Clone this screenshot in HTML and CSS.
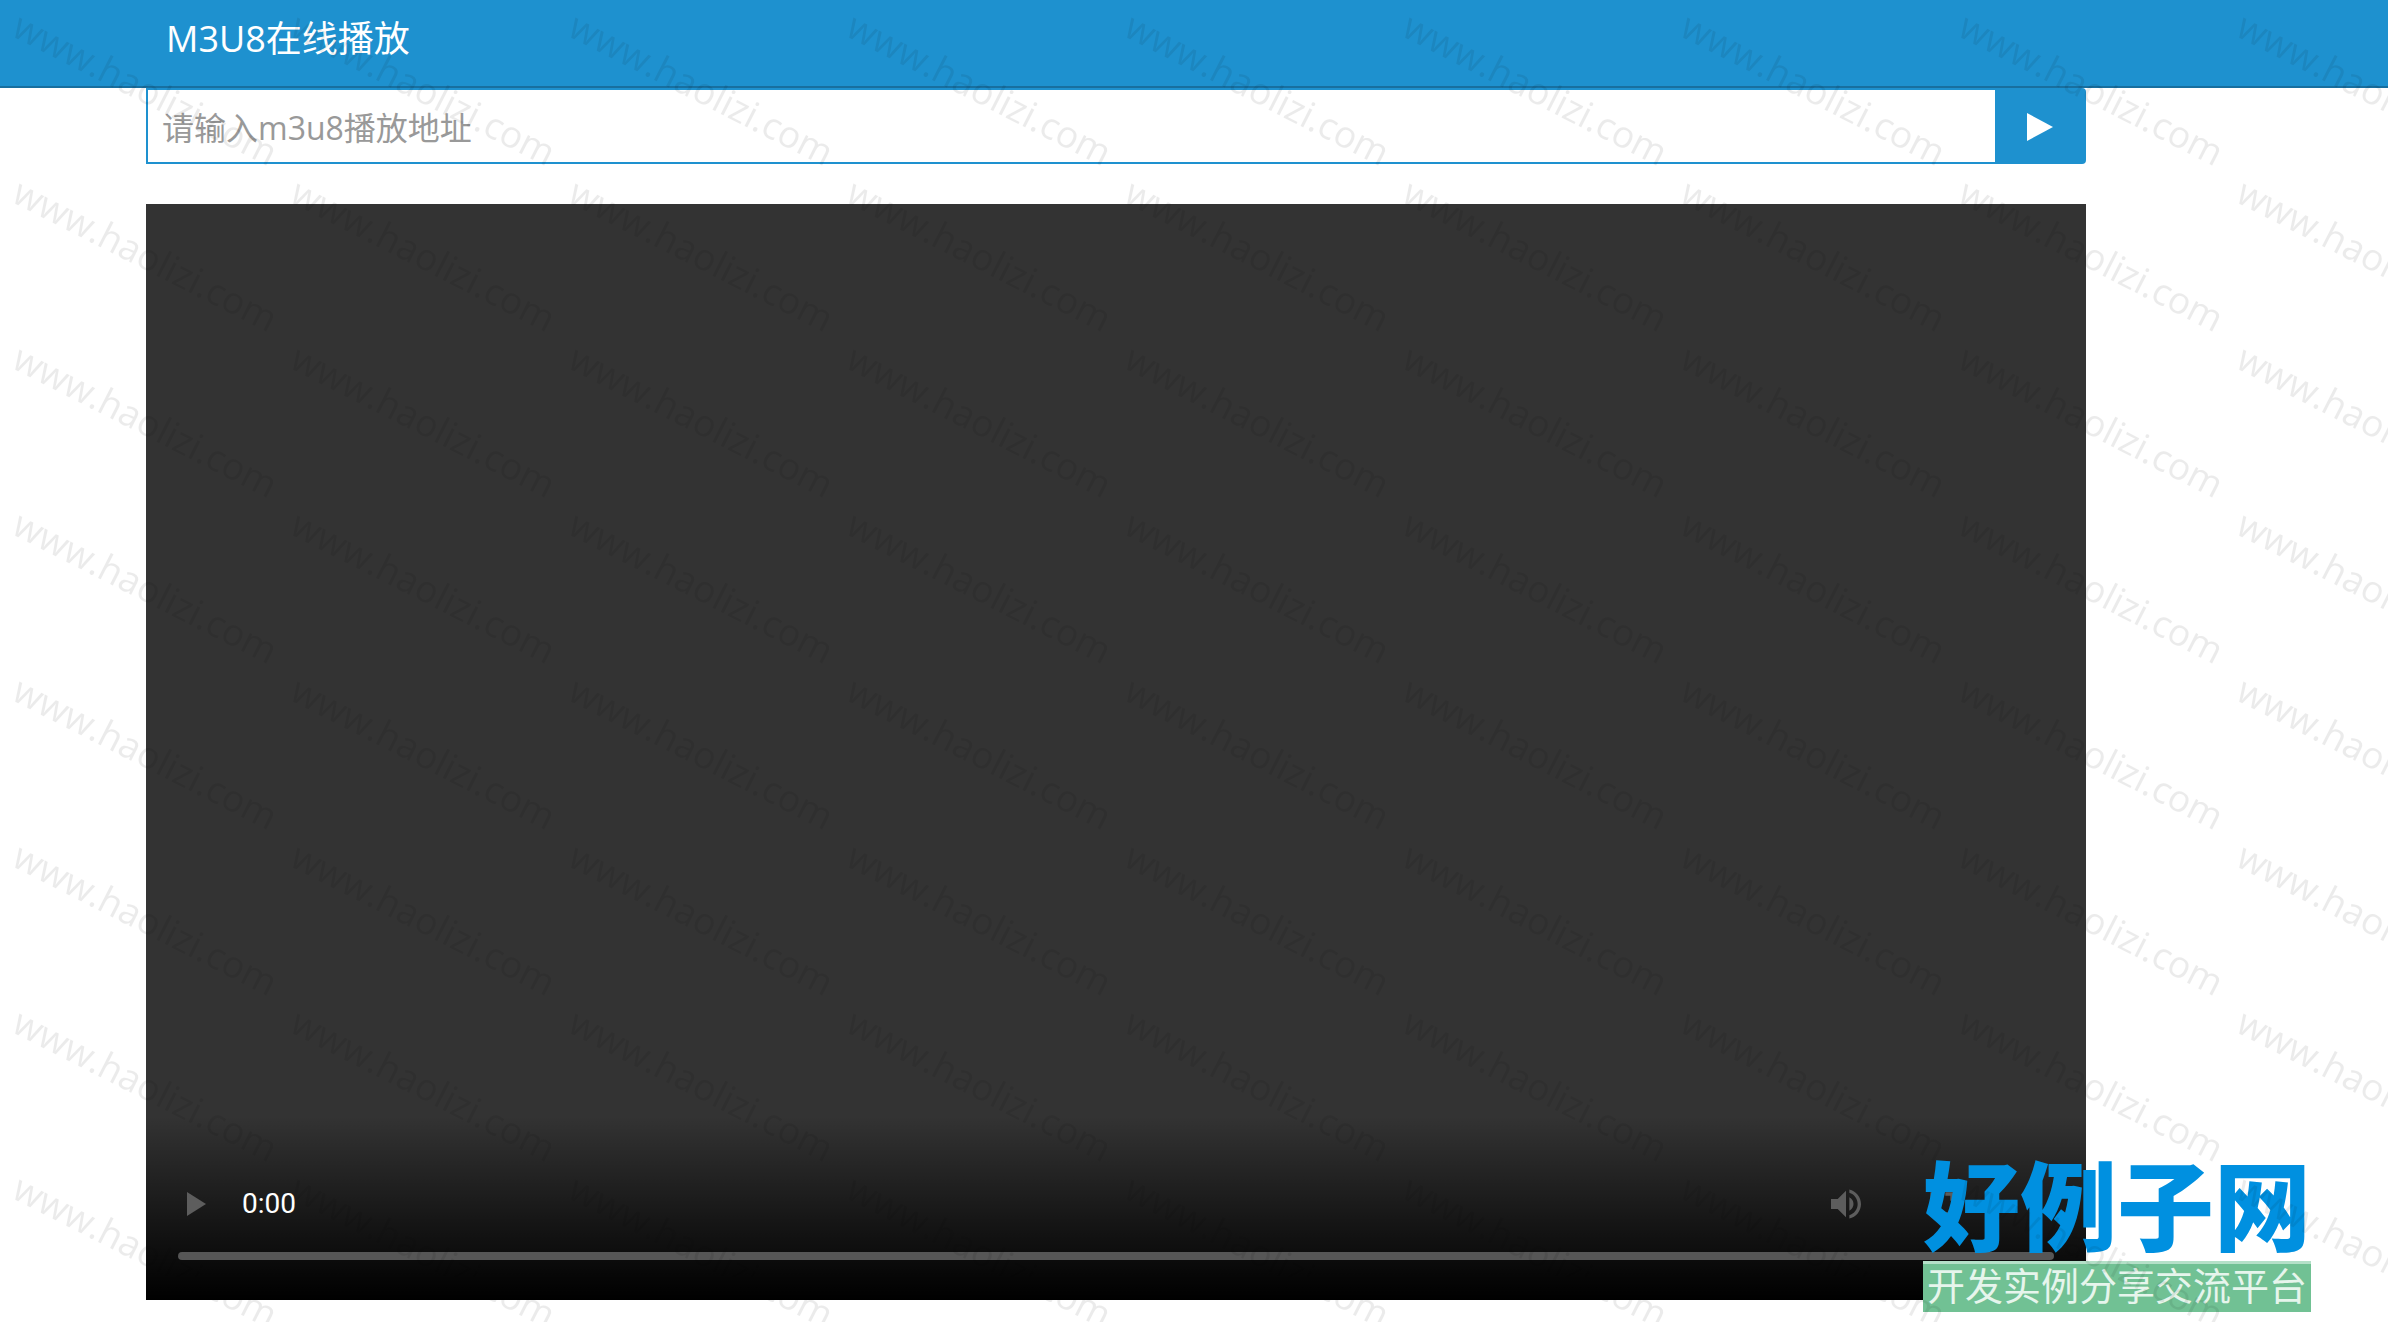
FILE: index.html
```html
<!DOCTYPE html>
<html lang="zh-CN">
<head>
<meta charset="utf-8">
<title>M3U8在线播放</title>
<link rel="stylesheet" href="styles.css">
</head>
<body>
<header class="header">
  <h1 class="title">M3U8在线播放</h1>
</header>
<main class="container">
  <form class="search">
    <input class="url" type="text" aria-label="m3u8播放地址" placeholder="请输入m3u8播放地址">
    <button class="go" type="button" aria-label="播放">
      <svg width="26" height="30" viewBox="0 0 26 30"><path d="M0 1L26 15L0 29Z" fill="#fff"/></svg>
    </button>
  </form>
  <section class="player" aria-label="视频播放器">
    <div class="controls">
      <div class="bar">
        <button class="ctl ctl-play" type="button" aria-label="播放视频">
          <svg width="19" height="24" viewBox="0 0 19 24"><path d="M0 0v24l19-12z"/></svg>
        </button>
        <span class="time">0:00</span>
        <button class="ctl" type="button" aria-label="音量">
          <svg width="40" height="40" viewBox="0 0 24 24"><path d="M3 9v6h4l5 5V4L7 9H3zm13.500 3c0-1.770-1.020-3.290-2.500-4.030v8.050c1.480-.730 2.500-2.250 2.500-4.020zM14 3.230v2.060c2.890.860 5 3.540 5 6.710s-2.110 5.850-5 6.710v2.060c4.010-.910 7-4.490 7-8.770s-2.990-7.860-7-8.770z"/></svg>
        </button>
        <button class="ctl" type="button" aria-label="全屏">
          <svg width="40" height="40" viewBox="0 0 24 24"><path d="M7 14H5v5h5v-2H7v-3zm-2-4h2V7h3V5H5v5zm12 7h-3v2h5v-5h-2v3zM14 5v2h3v3h2V5h-5z"/></svg>
        </button>
      </div>
      <input class="seek" type="range" aria-label="进度" min="0" max="100" value="0">
    </div>
  </section>
</main>
<aside class="brand">
  <strong class="brand-name">好例子网</strong>
  <span class="brand-tag">开发实例分享交流平台</span>
</aside>
<svg class="watermark" aria-hidden="true">
  <defs>
    <pattern id="mark" width="278" height="166" patternUnits="userSpaceOnUse">
      <text class="mark-text" transform="translate(10 35) rotate(27)">www.haolizi.com</text>
    </pattern>
  </defs>
  <rect width="100%" height="100%" fill="url(#mark)"/>
</svg>
</body>
</html>
```
FILE: styles.css
```css
* { box-sizing: border-box; }
body {
  position: relative;
  margin: 0;
  padding-bottom: 22px;
  background: #fff;
  font-family: "Open Sans", "Noto Sans CJK SC", sans-serif;
}
.header {
  height: 88px;
  padding: 0 166px;
  background: #1e91cf;
  border-bottom: 2px solid #186f9f;
}
.title {
  margin: 0;
  color: #fff;
  font-size: 36px;
  font-weight: 400;
  line-height: 78px;
}
.container { margin: 0 302px 0 146px; }
.search { display: flex; height: 76px; margin-bottom: 40px; }
.url {
  flex: 1;
  min-width: 0;
  padding: 2px 14px 0;
  border: 2px solid #1e91cf;
  border-right: 0;
  border-radius: 0;
  outline: 0;
  background: #fff;
  font: 32px "Open Sans", "Noto Sans CJK SC", sans-serif;
}
.url::placeholder { color: #999; opacity: 1; }
.go {
  display: flex;
  align-items: center;
  justify-content: center;
  width: 91px;
  padding: 2px 2px 0 0;
  border: 0;
  border-radius: 0 4px 4px 0;
  background: #1e91cf;
}
.player {
  display: flex;
  align-items: flex-end;
  aspect-ratio: 485 / 274;
  background: #333;
}
.controls {
  flex: 1;
  padding: 56px 32px 40px;
  background: linear-gradient(rgba(0, 0, 0, 0), #000);
}
.bar {
  display: flex;
  align-items: center;
  height: 64px;
  margin-bottom: 16px;
  padding-right: 64px;
}
.ctl {
  display: flex;
  align-items: center;
  justify-content: center;
  width: 96px;
  height: 64px;
  padding: 0;
  border: 0;
  background: none;
  fill: #5d5d5d;
}
.ctl-play { width: 36px; margin-right: 28px; }
.time {
  flex: 1;
  color: #fff;
  font: 28px/64px Roboto, sans-serif;
}
.seek {
  display: block;
  width: 100%;
  height: 8px;
  margin: 0;
  border-radius: 4px;
  background: #565656;
  appearance: none;
}
.seek::-webkit-slider-thumb { appearance: none; width: 0; height: 0; }
.brand {
  position: absolute;
  right: 77px;
  bottom: 10px;
  display: flex;
  flex-direction: column;
}
.brand-name {
  padding-bottom: 4px;
  color: #0090e0;
  font: 900 97px/112px "Noto Sans CJK SC", serif;
}
.brand-tag {
  padding: 0 4px 8px;
  border-top: 3px solid #b4e0c8;
  background: #71c194;
  color: #e6f5ec;
  font: 38px/40px "Noto Sans CJK SC", sans-serif;
}
.watermark {
  position: absolute;
  inset: 0;
  width: 100%;
  height: 100%;
  pointer-events: none;
}
.mark-text {
  fill: #000;
  fill-opacity: 0.08;
  font: 37px "Open Sans", sans-serif;
}
```
